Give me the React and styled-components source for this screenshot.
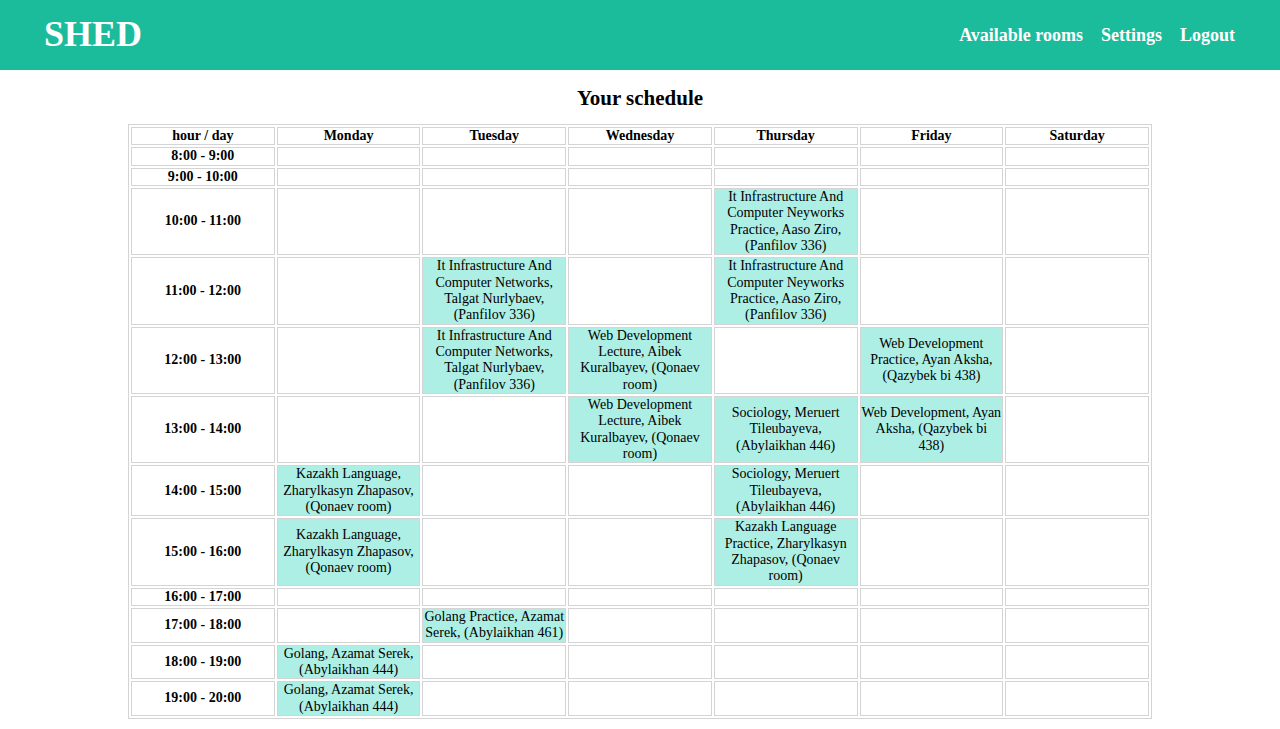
import React from "react";
import styled, { createGlobalStyle } from "styled-components";

const GlobalStyle = createGlobalStyle`
  html, body {
    margin: 0;
    padding: 0;
    background: #ffffff;
    font-family: "Liberation Serif", "Times New Roman", serif;
    font-size: 14px;
    color: #000;
  }
`;

const Header = styled.header`
  height: 70px;
  background: #1abc9c;
  display: flex;
  align-items: center;
  justify-content: space-between;
  padding: 0 45px 0 44px;
  box-sizing: border-box;
`;

const Logo = styled.div`
  color: #ffffff;
  font-size: 36px;
  font-weight: bold;
  line-height: 1;
  margin-top: -2px;
`;

const Nav = styled.nav`
  display: flex;
  gap: 18px;
`;

const NavLink = styled.a`
  color: #ffffff;
  font-size: 18px;
  font-weight: bold;
  text-decoration: none;
  cursor: pointer;
`;

const Title = styled.h2`
  margin: 16px 0 14px;
  font-size: 21px;
  line-height: 24px;
  font-weight: bold;
  text-align: center;
`;

const Table = styled.table`
  width: 80%;
  margin: 0 auto 12px;
  table-layout: fixed;
  border: 1px solid #d4d4d4;
  border-spacing: 2px;
  border-collapse: separate;
`;

const HeadCell = styled.th`
  border: 1px solid #d4d4d4;
  padding: 0;
  font-weight: bold;
  text-align: center;
  vertical-align: middle;
  line-height: 16.33px;
  white-space: nowrap;
`;

const Cell = styled.td`
  border: 1px solid #d4d4d4;
  padding: 0;
  text-align: center;
  vertical-align: middle;
  line-height: 16.33px;
  white-space: nowrap;
  background: ${(p) => (p.$busy ? "#adefe5" : "transparent")};
`;

const days = ["Monday", "Tuesday", "Wednesday", "Thursday", "Friday", "Saturday"];

const hours = [
  "8:00 - 9:00",
  "9:00 - 10:00",
  "10:00 - 11:00",
  "11:00 - 12:00",
  "12:00 - 13:00",
  "13:00 - 14:00",
  "14:00 - 15:00",
  "15:00 - 16:00",
  "16:00 - 17:00",
  "17:00 - 18:00",
  "18:00 - 19:00",
  "19:00 - 20:00",
];

const itTalgat = ["It Infrastructure And", "Computer Networks,", "Talgat Nurlybaev,", "(Panfilov 336)"];
const itAaso = ["It Infrastructure And", "Computer Neyworks", "Practice, Aaso Ziro,", "(Panfilov 336)"];
const webLecture = ["Web Development", "Lecture, Aibek", "Kuralbayev, (Qonaev", "room)"];
const kazakh = ["Kazakh Language,", "Zharylkasyn Zhapasov,", "(Qonaev room)"];
const sociology = ["Sociology, Meruert", "Tileubayeva,", "(Abylaikhan 446)"];
const golang = ["Golang, Azamat Serek,", "(Abylaikhan 444)"];

// schedule[hourIndex][dayIndex]
const schedule = {
  2: { 3: itAaso },
  3: { 1: itTalgat, 3: itAaso },
  4: {
    1: itTalgat,
    2: webLecture,
    4: ["Web Development", "Practice, Ayan Aksha,", "(Qazybek bi 438)"],
  },
  5: {
    2: webLecture,
    3: sociology,
    4: ["Web Development, Ayan", "Aksha, (Qazybek bi", "438)"],
  },
  6: { 0: kazakh, 3: sociology },
  7: {
    0: kazakh,
    3: ["Kazakh Language", "Practice, Zharylkasyn", "Zhapasov, (Qonaev", "room)"],
  },
  9: { 1: ["Golang Practice, Azamat", "Serek, (Abylaikhan 461)"] },
  10: { 0: golang },
  11: { 0: golang },
};

function Lines({ lines }) {
  return lines.map((line, i) => (
    <React.Fragment key={i}>
      {i > 0 && <br />}
      {line}
    </React.Fragment>
  ));
}

export default function App() {
  return (
    <>
      <GlobalStyle />
      <Header>
        <Logo>SHED</Logo>
        <Nav>
          <NavLink>Available rooms</NavLink>
          <NavLink>Settings</NavLink>
          <NavLink>Logout</NavLink>
        </Nav>
      </Header>
      <Title>Your schedule</Title>
      <Table>
        <thead>
          <tr>
            <HeadCell>hour / day</HeadCell>
            {days.map((d) => (
              <HeadCell key={d}>{d}</HeadCell>
            ))}
          </tr>
        </thead>
        <tbody>
          {hours.map((h, hi) => (
            <tr key={h}>
              <HeadCell>{h}</HeadCell>
              {days.map((d, di) => {
                const lesson = schedule[hi] && schedule[hi][di];
                return (
                  <Cell key={d} $busy={!!lesson}>
                    {lesson ? <Lines lines={lesson} /> : null}
                  </Cell>
                );
              })}
            </tr>
          ))}
        </tbody>
      </Table>
    </>
  );
}
